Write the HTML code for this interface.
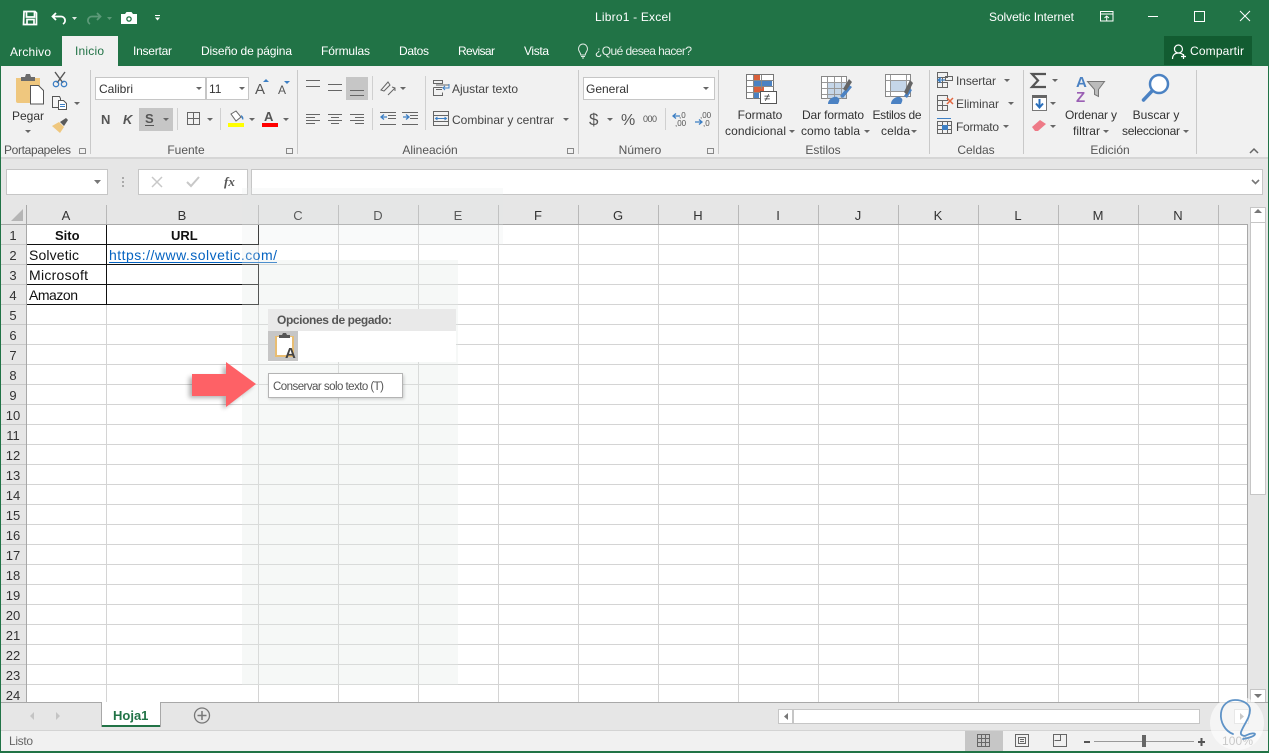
<!DOCTYPE html>
<html lang="es"><head><meta charset="utf-8"><title>Libro1 - Excel</title>
<style>
html,body{margin:0;padding:0;background:#fff;overflow:hidden;width:1269px;height:753px}
svg{display:block;font-family:"Liberation Sans",sans-serif}
text{font-size:12px;fill:#444}
.w text{fill:#fff}
.m{text-anchor:middle}
.c text{font-size:14px;fill:#111}
.h text{font-size:13px;fill:#333;text-anchor:middle}
.cr{shape-rendering:crispEdges}
</style></head><body>
<svg width="1269" height="753" viewBox="0 0 1269 753" xmlns="http://www.w3.org/2000/svg">
<defs><path id="d" d="M0 0h6l-3 3z" fill="#666"/>
<filter id="b" x="-20%" y="-20%" width="140%" height="140%"><feGaussianBlur stdDeviation="2.5"/></filter>
<filter id="s" x="-10%" y="-30%" width="120%" height="160%"><feGaussianBlur stdDeviation="1.5"/></filter></defs>
<!-- bases -->
<g class="cr">
<rect width="1269" height="753" fill="#217346"/>
<rect x="1" y="66" width="1267" height="91" fill="#f1f1f1"/>
<rect x="1" y="157" width="1267" height="2" fill="#d6d6d6"/>
<rect x="1" y="159" width="1267" height="66" fill="#e6e6e6"/>
<rect x="62" y="36" width="56" height="30" fill="#f1f1f1"/>
<rect x="1164" y="36" width="88" height="29" fill="#125c31"/>
</g>
<!-- title bar -->
<g class="w">
<text x="595" y="21" textLength="76">Libro1  -  Excel</text>
<text x="989" y="21" textLength="85">Solvetic Internet</text>
<text x="10" y="56" textLength="41">Archivo</text>
<text x="75" y="55" textLength="29" style="fill:#217346">Inicio</text>
<text x="133" y="55" textLength="39">Insertar</text>
<text x="201" y="55" textLength="91">Diseño de página</text>
<text x="321" y="55" textLength="49">Fórmulas</text>
<text x="399" y="55" textLength="30">Datos</text>
<text x="458" y="55" textLength="37">Revisar</text>
<text x="524" y="55" textLength="25">Vista</text>
<text x="595" y="55" textLength="97" style="fill:#e4eee8">¿Qué desea hacer?</text>
<text x="1190" y="55" textLength="54">Compartir</text>
</g>
<!-- QAT icons -->
<path d="M24 11.500h11l1.500 1.500v11.500h-13zM26.500 12v5h8v-5M27 24v-4.500h7V24" fill="none" stroke="#fff" stroke-width="1.700"/>
<path d="M56 13l-3.500 3.500 3.500 3.500M53 16.500h8a4 4 0 0 1 2 7.500" fill="none" stroke="#fff" stroke-width="1.800"/>
<path d="M72 17h5l-2.500 3z" fill="#dfe9e3"/>
<path d="M97 13l3.500 3.500-3.500 3.500M100 16.500h-8a4 4 0 0 0-2 7.500" fill="none" stroke="#5d9a79" stroke-width="1.800"/>
<path d="M107 17h5l-2.500 3z" fill="#5d9a79"/>
<path d="M121 14h4l1.500-2h5l1.500 2h4v10h-16z" fill="#fff"/><circle cx="129" cy="19" r="2.800" fill="#217346"/><circle cx="129" cy="19" r="1.500" fill="#fff"/>
<path d="M155 15h5v1h-5zM155 17.500h5l-2.500 3z" fill="#fff"/>
<!-- window controls -->
<path d="M1100.500 11.500h12.500v9.500h-12.500zM1100.500 14h12.500M1106.700 21v-5M1104.500 18l2.200-2 2.200 2" fill="none" stroke="#fff" stroke-width="1"/>
<path class="cr" d="M1148 16.500h10M1194.500 11.500h10v10h-10z" fill="none" stroke="#fff"/>
<path d="M1240 11l10 10M1250 11l-10 10" stroke="#fff" fill="none"/>
<path d="M578.500 49a4.500 5 0 1 1 9 0c0 2.500-2 3-2.300 6h-4.400c-.3-3-2.300-3.500-2.300-6zM581 56.500h4M582 58h2" fill="none" stroke="#dfe9e3"/>
<path d="M1172.500 59c0-4 2.500-6 5.500-6s5 1 6 3M1178.500 53a4 4 0 1 0-.1-8 4 4 0 0 0 .1 8zM1181 56.500h5M1183.500 54v5" fill="none" stroke="#fff" stroke-width="1.200"/>
<!-- ribbon separators -->
<path class="cr" d="M90.500 70v84M297.500 70v84M578.500 70v84M718.500 70v84M929.500 70v84M1023.500 70v84M1196.500 70v84" stroke="#c9c9c9"/>
<path class="cr" d="M372.500 76v24M372.500 108v22M425.500 76v54M177.500 108v22M220.500 108v22M665.500 108v22" stroke="#d0d0d0"/>
<!-- group labels -->
<text x="4" y="154" textLength="67" style="fill:#555">Portapapeles</text>
<text x="186" y="154" class="m" style="fill:#555">Fuente</text>
<text x="430" y="154" class="m" style="fill:#555">Alineación</text>
<text x="640" y="154" class="m" style="fill:#555">Número</text>
<text x="823" y="154" class="m" style="fill:#555">Estilos</text>
<text x="976" y="154" class="m" style="fill:#555">Celdas</text>
<text x="1110" y="154" class="m" style="fill:#555">Edición</text>
<g fill="none" stroke="#888"><path class="cr" d="M79.500 148.500h6M79.500 148.500v5h6v-5M286.500 148.500h6v5h-6zM567.500 148.500h6v5h-6zM707.500 148.500h6v5h-6z"/></g>
<path d="M1250 153l4-4 4 4" fill="none" stroke="#666" stroke-width="1.500"/>
<!-- clipboard -->
<path d="M16 78h24v25H18a2 2 0 0 1-2-2z" fill="#efc77e"/>
<path d="M21 77h4l1-3h4l1 3h4v4H21z" fill="#6b6b6b"/>
<path d="M30.500 85.500h8l5 5v13.500h-13z" fill="#fff" stroke="#555"/>
<text x="28" y="120" class="m" style="fill:#333">Pegar</text><use href="#d" x="25" y="130"/>
<path d="M55 72l8 11M65 72l-8 11" stroke="#555" stroke-width="1.400"/><circle cx="56" cy="84" r="2.700" fill="none" stroke="#3d7fc4" stroke-width="1.300"/><circle cx="64" cy="84" r="2.700" fill="none" stroke="#3d7fc4" stroke-width="1.300"/>
<path d="M52.500 96.500h7l1 2v9h-8z" fill="#f5f5f5" stroke="#555"/><path d="M58.500 100.500h5l3 3v6h-8z" fill="#fff" stroke="#555"/><path d="M60 104.500h5M60 106.500h5" stroke="#3d7fc4"/>
<use href="#d" x="74" y="102"/>
<path d="M52 126l7-4 5 5-4 6z" fill="#efc77e"/><path d="M60 122l6-4 2 2-4 6z" fill="#5a5a5a"/>
<!-- font boxes -->
<g class="cr" fill="#fff" stroke="#c6c6c6"><rect x="95.500" y="77.500" width="110" height="22"/><rect x="206.500" y="77.500" width="42" height="22"/><rect x="583.500" y="77.500" width="131" height="22"/></g>
<text x="99" y="93" style="fill:#333">Calibri</text><use href="#d" x="196" y="87"/>
<text x="209" y="93" style="fill:#333">11</text><use href="#d" x="239" y="87"/>
<text x="586" y="93" style="fill:#333">General</text><use href="#d" x="703" y="87"/>
<text x="255" y="94" style="font-size:15px;fill:#555">A</text><path d="M263 82h6l-3-3z" fill="#3d7fc4"/>
<text x="278" y="94" style="font-size:12px;fill:#555">A</text><path d="M284 81h6l-3 3z" fill="#3d7fc4"/>
<rect class="cr" x="139" y="108" width="34" height="23" fill="#c6c6c6"/>
<text x="101" y="124" style="font-weight:bold;font-size:13px;fill:#555">N</text>
<text x="123" y="124" style="font-weight:bold;font-style:italic;font-size:13px;fill:#555">K</text>
<text x="145" y="123" style="font-weight:bold;font-size:13px;fill:#555">S</text><path class="cr" d="M145 125.500h9" stroke="#555"/>
<use href="#d" x="163" y="118"/>
<path class="cr" d="M187.500 112.500h12v12h-12zM193.500 112v13M187 118.500h13" fill="none" stroke="#666"/><use href="#d" x="207" y="118"/>
<path d="M231 114l5-3 5 6-5 4z" fill="#fff" stroke="#666"/><path d="M241 115c2 1 3 3 2 5-1-1-2-3-2-5z" fill="#3d7fc4"/>
<rect class="cr" x="228" y="123" width="16" height="4" fill="#ffff00"/><use href="#d" x="249" y="118"/>
<text x="264" y="121" style="font-weight:bold;font-size:13px;fill:#555">A</text>
<rect class="cr" x="262" y="123" width="16" height="4" fill="#f00"/><use href="#d" x="283" y="118"/>
<!-- alignment -->
<rect class="cr" x="346" y="77" width="22" height="23" fill="#c6c6c6"/>
<path class="cr" d="M306 80.500h14M306 86.500h14M328 84.500h14M328 90.500h14M350 90.500h14M350 95.500h14M306 114.500h14M306 117.500h9M306 120.500h14M306 123.500h9M328 114.500h14M331 117.500h8M328 120.500h14M331 123.500h8M350 114.500h14M355 117.500h9M350 120.500h14M355 123.500h9" stroke="#666"/>
<path d="M381 90l7-8 2 3-6 6zM388 95l7-7M392 87l3 1v3" fill="none" stroke="#666"/><use href="#d" x="400" y="87"/>
<path class="cr" d="M380 112.500h16M388 115.500h8M388 118.500h8M380 124.500h16M402 112.500h16M410 115.500h8M410 118.500h8M402 124.500h16" stroke="#666"/>
<path d="M387 117h-6M384 114.500l-3 2.500 3 2.500M403 117h6M406 114.500l3 2.500-3 2.500" fill="none" stroke="#3d7fc4" stroke-width="1.300"/>
<path class="cr" d="M433.500 80.500h9v3h-9zM433.500 87.500h9M433.500 87.500v8h9v-3M436 85h13M436 89.500h6" fill="none" stroke="#666"/><path d="M449 84v4h-6M445 86l-2 2 2 2" fill="none" stroke="#3d7fc4"/>
<text x="452" y="93" textLength="66">Ajustar texto</text>
<path class="cr" d="M433.500 111.500h15v14h-15zM433.500 115.500h15M433.500 121.500h15" fill="none" stroke="#666"/><path d="M436 118.500h10M437.500 117l-2 1.500 2 1.500M444.500 117l2 1.500-2 1.500" fill="none" stroke="#3d7fc4"/>
<text x="452" y="124" textLength="102">Combinar y centrar</text><use href="#d" x="563" y="118"/>
<!-- number -->
<text x="589" y="125" style="font-size:17px;fill:#555">$</text><use href="#d" x="607" y="118"/>
<text x="621" y="125" style="font-size:16px;fill:#555">%</text>
<text x="643" y="122" textLength="14" style="font-size:9px;fill:#555">000</text>
<text x="679" y="118" style="font-size:8px;fill:#555">,0</text><text x="675" y="126" style="font-size:8px;fill:#555">,00</text>
<path d="M680 116h-7M676 113.500l-3 2.500 3 2.500" fill="none" stroke="#3d7fc4" stroke-width="1.300"/>
<text x="700" y="118" style="font-size:8px;fill:#555">,00</text><text x="703" y="126" style="font-size:8px;fill:#555">,0</text>
<path d="M695 122h7M699 119.500l3 2.500-3 2.500" fill="none" stroke="#3d7fc4" stroke-width="1.300"/>
<!-- styles icons -->
<g class="cr">
<rect x="746.500" y="74.500" width="27" height="24" fill="#fff" stroke="#777"/>
<rect x="754" y="75" width="6" height="5" fill="#d9603b"/><rect x="754" y="81" width="18" height="5" fill="#4b82c3"/><rect x="754" y="87" width="10" height="5" fill="#d9603b"/><rect x="754" y="93" width="5" height="5" fill="#4b82c3"/>
<path d="M753.500 75v24M761.500 75v14M747 80.500h27M747 86.500h27M747 92.500h14" stroke="#888" fill="none"/>
<rect x="760.500" y="91.500" width="16" height="12" fill="#fff" stroke="#555"/>
<rect x="821.500" y="76.500" width="25" height="22" fill="#fff" stroke="#888"/><rect x="828" y="83" width="18" height="15" fill="#c5d6e8"/>
<path d="M827.500 77v22M834.500 77v22M841.500 77v22M822 82.500h25M822 88.500h25M822 94.500h25" stroke="#999" fill="none"/>
<rect x="885.500" y="74.500" width="25" height="22" fill="#fff" stroke="#888"/><rect x="891" y="80" width="15" height="12" fill="#c5d6e8"/>
<path d="M890.500 75v22M906.500 75v22M886 80.500h25M886 91.500h25" stroke="#999" fill="none"/>
</g>
<text x="767" y="101" class="m" style="font-size:11px;fill:#333">≠</text>
<path d="M840 96l9-11 3 2-9 11zM828 104c0-5 6-8 9-7 3 2 3 3 1 7z" fill="#4b82c3"/><path d="M843 89l6-10 3 3-6 9z" fill="#666"/>
<path d="M904 96l5-8 3 2-5 8zM891 104c0-5 6-8 9-7 3 2 3 3 1 7z" fill="#4b82c3"/><path d="M904 92l6-12 3 3-6 12z" fill="#666"/>
<text x="760" y="119" class="m" style="fill:#333">Formato</text><text x="725" y="135" textLength="61" style="fill:#333">condicional</text><use href="#d" x="789" y="130"/>
<text x="833" y="119" class="m" textLength="62" style="fill:#333">Dar formato</text><text x="801" y="135" textLength="59" style="fill:#333">como tabla</text><use href="#d" x="864" y="130"/>
<text x="897" y="119" class="m" textLength="49" style="fill:#333">Estilos de</text><text x="881" y="135" textLength="29" style="fill:#333">celda</text><use href="#d" x="911" y="130"/>
<!-- cells -->
<g fill="none" stroke="#666" class="cr"><path d="M937.500 72.500h10v5h-10zM937.500 82.500h5v5h-5zM942.500 82.500h5v5h-5zM937.500 77.500h5v5h-5zM945.500 76.500h7v4h-7z"/>
<path d="M937.500 95.500h10v5h-10zM937.500 105.500h5v5h-5zM942.500 105.500h5v5h-5zM937.500 100.500h5v5h-5z"/>
<rect x="937.500" y="121.500" width="14" height="12"/><path d="M942.500 122v12M947.500 122v12M938 125.500h14M938 129.500h14"/></g>
<path d="M945 80h-7M941 77.500l-3 2.500 3 2.500" fill="none" stroke="#3d7fc4" stroke-width="1.300"/>
<path d="M947 98l6 6M953 98l-6 6" stroke="#e2663f" stroke-width="1.500"/>
<rect x="942" y="125" width="6" height="5" fill="#3d7fc4"/><path d="M937 118.500h14" stroke="#3d7fc4"/>
<text x="956" y="85" textLength="40">Insertar</text><use href="#d" x="1004" y="79"/>
<text x="956" y="108" textLength="43">Eliminar</text><use href="#d" x="1008" y="102"/>
<text x="956" y="131" textLength="43">Formato</text><use href="#d" x="1003" y="125"/>
<!-- edition -->
<path d="M1046 74h-14l6 6.500-6 6.500h14" fill="none" stroke="#555" stroke-width="2.200"/><use href="#d" x="1052" y="79"/>
<rect class="cr" x="1032.500" y="95.500" width="14" height="15" fill="#fff" stroke="#777"/><rect class="cr" x="1032" y="95" width="15" height="3" fill="#666"/>
<path d="M1039.500 99v8M1036 103.500l3.500 4 3.500-4" fill="none" stroke="#2a6fbb" stroke-width="2"/><use href="#d" x="1050" y="102"/>
<path d="M1032 127l8-7 6 4-8 7h-3z" fill="#ee7a87"/><use href="#d" x="1050" y="125"/>
<text x="1076" y="87" style="font-size:15px;font-weight:bold;fill:#4b82c3">A</text>
<text x="1076" y="102" style="font-size:15px;font-weight:bold;fill:#9a5fb4">Z</text>
<path d="M1087.500 81.500h17l-6 8v7l-4-2v-5z" fill="#bbb" stroke="#777"/>
<text x="1091" y="119" class="m" textLength="52" style="fill:#333">Ordenar y</text><text x="1073" y="135" textLength="27" style="fill:#333">filtrar</text><use href="#d" x="1103" y="130"/>
<circle cx="1159" cy="84" r="9" fill="#fff" stroke="#4b82c3" stroke-width="2.500"/><path d="M1152 91l-8.500 9" stroke="#4b82c3" stroke-width="3.500" stroke-linecap="round"/>
<text x="1156" y="119" class="m" style="fill:#333">Buscar y</text><text x="1122" y="135" textLength="58" style="fill:#333">seleccionar</text><use href="#d" x="1183" y="130"/>
<!-- formula bar -->
<g class="cr" fill="#fff" stroke="#c6c6c6"><rect x="6.500" y="169.500" width="101" height="25"/><rect x="138.500" y="169.500" width="109" height="25"/><rect x="251.500" y="169.500" width="1011" height="25"/></g>
<path d="M94 180h7l-3.500 4z" fill="#777"/>
<path class="cr" d="M122 177h2v2h-2zM122 181h2v2h-2zM122 185h2v2h-2z" fill="#aaa"/>
<path d="M152 177l10 10M162 177l-10 10" stroke="#c8c8c8" stroke-width="1.500"/>
<path d="M187 182l4 4 8-9" stroke="#c8c8c8" stroke-width="2" fill="none"/>
<text x="224" y="186" style="font-family:'Liberation Serif',serif;font-style:italic;font-weight:bold;font-size:13px;fill:#555">fx</text>
<path d="M1252 180l3.500 3.500 3.500-3.500" fill="none" stroke="#777" stroke-width="1.600"/>
<!-- grid -->
<g class="cr">
<rect x="27" y="225" width="1220" height="478" fill="#fff"/>
<path d="M106.500 225v478M258.500 225v478M338.500 225v478M418.500 225v478M498.500 225v478M578.500 225v478M658.500 225v478M738.500 225v478M818.500 225v478M898.500 225v478M978.500 225v478M1058.500 225v478M1138.500 225v478M1218.500 225v478" stroke="#d4d4d4"/>
<path d="M27 244.500h1220M27 264.500h1220M27 284.500h1220M27 304.500h1220M27 324.500h1220M27 344.500h1220M27 364.500h1220M27 384.500h1220M27 404.500h1220M27 424.500h1220M27 444.500h1220M27 464.500h1220M27 484.500h1220M27 504.500h1220M27 524.500h1220M27 544.500h1220M27 564.500h1220M27 584.500h1220M27 604.500h1220M27 624.500h1220M27 644.500h1220M27 664.500h1220M27 684.500h1220" stroke="#d4d4d4"/>
<rect x="1" y="205" width="26" height="498" fill="#e6e6e6"/>
<path d="M1 224.500h1246M26.500 205v498" stroke="#a8a8a8"/>
<path d="M106.500 205v19M258.500 205v19M338.500 205v19M418.500 205v19M498.500 205v19M578.500 205v19M658.500 205v19M738.500 205v19M818.500 205v19M898.500 205v19M978.500 205v19M1058.500 205v19M1138.500 205v19M1218.500 205v19" stroke="#b8b8b8"/>
<path d="M1 244.500h25M1 264.500h25M1 284.500h25M1 304.500h25M1 324.500h25M1 344.500h25M1 364.500h25M1 384.500h25M1 404.500h25M1 424.500h25M1 444.500h25M1 464.500h25M1 484.500h25M1 504.500h25M1 524.500h25M1 544.500h25M1 564.500h25M1 584.500h25M1 604.500h25M1 624.500h25M1 644.500h25M1 664.500h25M1 684.500h25" stroke="#c8c8c8"/>
<path d="M1247.500 224v479" stroke="#a8a8a8"/>
</g>
<path d="M23 209v12H11z" fill="#b5b5b5"/>
<g class="h">
<text x="66" y="220">A</text><text x="182" y="220">B</text><text x="298" y="220">C</text><text x="378" y="220">D</text><text x="458" y="220">E</text><text x="538" y="220">F</text><text x="618" y="220">G</text><text x="698" y="220">H</text><text x="778" y="220">I</text><text x="858" y="220">J</text><text x="938" y="220">K</text><text x="1018" y="220">L</text><text x="1098" y="220">M</text><text x="1178" y="220">N</text>
<text x="13" y="240">1</text><text x="13" y="260">2</text><text x="13" y="280">3</text><text x="13" y="300">4</text><text x="13" y="320">5</text><text x="13" y="340">6</text><text x="13" y="360">7</text><text x="13" y="380">8</text><text x="13" y="400">9</text><text x="13" y="420">10</text><text x="13" y="440">11</text><text x="13" y="460">12</text><text x="13" y="480">13</text><text x="13" y="500">14</text><text x="13" y="520">15</text><text x="13" y="540">16</text><text x="13" y="560">17</text><text x="13" y="580">18</text><text x="13" y="600">19</text><text x="13" y="620">20</text><text x="13" y="640">21</text><text x="13" y="660">22</text><text x="13" y="680">23</text><text x="13" y="700">24</text>
</g>
<!-- cell borders -->
<path class="cr" d="M27 244.500h232M27 264.500h232M27 284.500h232M27 304.500h232M106.500 225v80M258.500 225v20M258.500 264v41" stroke="#111" fill="none"/>
<g class="c">
<text x="55" y="240" style="font-weight:bold;font-size:13px">Sito</text>
<text x="171" y="240" style="font-weight:bold;font-size:13px">URL</text>
<text x="29" y="260" textLength="50">Solvetic</text>
<text x="109" y="260" textLength="168" style="fill:#0563c1">https://www.solvetic.com/</text>
<text x="29" y="280" textLength="59">Microsoft</text>
<text x="29" y="300" textLength="49">Amazon</text>
</g>
<path class="cr" d="M109 262.500h168" stroke="#0563c1"/>
<!-- ghost overlays -->
<g class="cr">
<rect x="242" y="188" width="261" height="57" fill="#e3e9e6" opacity=".22"/>
<rect x="242" y="245" width="16" height="15" fill="#e3e9e6" opacity=".25"/>
<rect x="242" y="260" width="216" height="425" fill="#e3e9e6" opacity=".32"/>
</g>
<!-- paste menu -->
<g class="cr">
<rect x="268" y="309" width="188" height="53" fill="#fff"/>
<rect x="268" y="309" width="188" height="22" fill="#e9e9e9"/>
<rect x="268" y="331" width="30" height="30" fill="#c6c6c6"/>
</g>
<text x="277" y="324" textLength="115" style="font-weight:bold;fill:#555">Opciones de pegado:</text>
<path d="M275 336h19v21h-19z" fill="#e8bd72"/><path d="M277 337h15v18h-15z" fill="#fff"/><path d="M279 335h3l1-2h3l1 2h3v3h-11z" fill="#555"/>
<text x="285" y="358" style="font-weight:bold;font-size:15px;fill:#444">A</text>
<rect x="269" y="375" width="135" height="24" fill="#000" opacity=".18" filter="url(#s)"/>
<rect class="cr" x="268.500" y="373.500" width="134" height="24" fill="#fff" stroke="#b4b4b4"/>
<text x="273" y="390" textLength="111" style="font-size:11.500px;fill:#555">Conservar solo texto (T)</text>
<!-- arrow -->
<path d="M189 377h34v-12l30 21-30 23v-11h-34z" fill="#000" opacity=".3" filter="url(#b)"/>
<path d="M192 374h34v-12l30 22-30 23v-11h-34z" fill="#fe6166"/>
<!-- scrollbars -->
<g class="cr">
<rect x="1248" y="205" width="20" height="498" fill="#e6e6e6"/>
<rect x="1250.500" y="207.500" width="15" height="15" fill="#fff" stroke="#c6c6c6"/>
<rect x="1250.500" y="222.500" width="15" height="272" fill="#fff" stroke="#c6c6c6"/>
<rect x="1250.500" y="689.500" width="15" height="13" fill="#fff" stroke="#c6c6c6"/>
<rect x="1" y="703" width="1267" height="27" fill="#e6e6e6"/>
<path d="M1 702.500h1267" stroke="#a8a8a8"/>
<rect x="1" y="730" width="1267" height="21" fill="#f1f1f1"/>
<path d="M1 730.500h1267" stroke="#d4d4d4"/>
<rect x="101" y="702" width="60" height="25" fill="#fff"/>
<rect x="101" y="725" width="60" height="2" fill="#217346"/>
<path d="M101.500 702v25M160.500 702v25" stroke="#a8a8a8"/>
<rect x="778.500" y="709.500" width="14" height="14" fill="#fff" stroke="#c6c6c6"/>
<rect x="793.500" y="709.500" width="406" height="14" fill="#fff" stroke="#c6c6c6"/>
<rect x="1234.500" y="709.500" width="14" height="14" fill="#fff" stroke="#c6c6c6"/>
<rect x="965" y="731" width="38" height="20" fill="#c6c6c6"/>
</g>
<path d="M1254 213h8l-4-4zM1254 694h8l-4 4z" fill="#777"/>
<path d="M784 716.500l4-3.500v7zM1244 716.500l-4-3.500v7z" fill="#777"/>
<path d="M34 712l-4 4 4 4zM56 712l4 4-4 4z" fill="#c4c4c4"/>
<text x="113" y="720" style="font-weight:bold;font-size:13px;fill:#217346">Hoja1</text>
<circle cx="202" cy="715.500" r="7.500" fill="none" stroke="#777" stroke-width="1.300"/><path d="M197.500 715.500h9M202 711v9" stroke="#777" stroke-width="1.500"/>
<text x="9" y="745" textLength="24" style="fill:#666">Listo</text>
<!-- status icons -->
<path class="cr" d="M977.500 734.500h12v12h-12zM981.500 735v11M985.500 735v11M978 738.500h11M978 742.500h11" fill="none" stroke="#666"/>
<path class="cr" d="M1015.500 734.500h13v12h-13zM1018.500 737.500h7v6h-7zM1020 739.500h4M1020 741.500h4" fill="none" stroke="#666"/>
<path class="cr" d="M1053.500 734.500h13v12h-13zM1060.500 734.500v6h-6" fill="none" stroke="#666"/>
<path class="cr" d="M1084 741h6v2h-6zM1198 741h7v2h-7zM1200.500 738h2v8h-2z" fill="#555"/>
<path class="cr" d="M1094 741.500h100" stroke="#999"/>
<rect class="cr" x="1142" y="735" width="4" height="12" fill="#666"/>
<text x="1222" y="745" textLength="31" style="fill:#777">100%</text>
<!-- watermark -->
<circle cx="1237" cy="723" r="27" fill="#fff" opacity=".6"/>
<path d="M1233 734c-8-3-13-12-12-21 1-8 7-13 14-13 8 0 15 4 15 10 0 8-6 14-9 22-1 3 3 5 6 3 4-2 8-2 8-1 0 2-6 4-12 5" fill="none" stroke="#5f93c7" stroke-width="1.800" stroke-linecap="round"/>
<!-- frame -->
<g class="cr" fill="#217346">
<rect x="0" y="66" width="1" height="687"/>
<rect x="1268" y="66" width="1" height="687"/>
<rect x="0" y="751" width="1269" height="2"/>
</g>
</svg>
</body></html>
